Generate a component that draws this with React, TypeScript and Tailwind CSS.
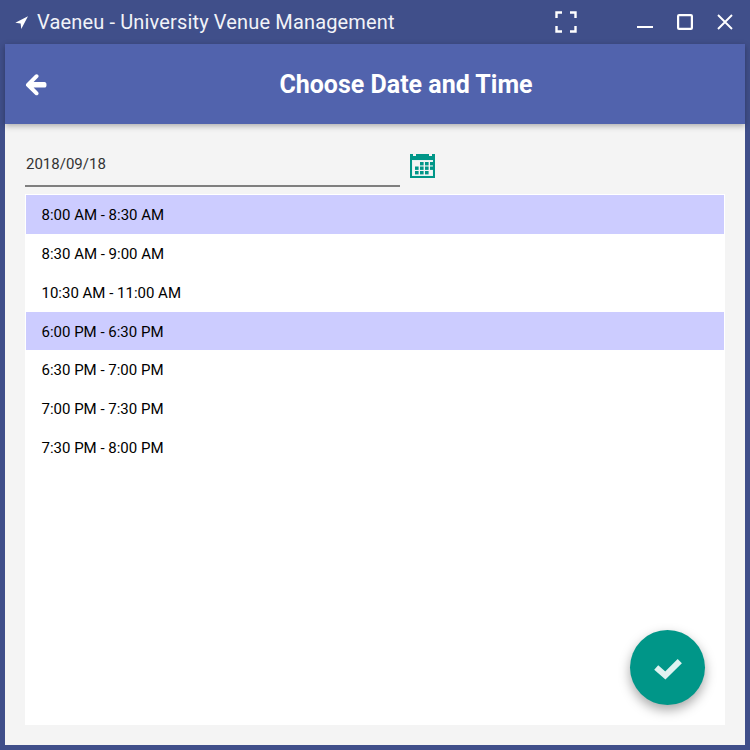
import React from "react";

const slots = [
  { label: "8:00 AM - 8:30 AM", selected: true },
  { label: "8:30 AM - 9:00 AM", selected: false },
  { label: "10:30 AM - 11:00 AM", selected: false },
  { label: "6:00 PM - 6:30 PM", selected: true },
  { label: "6:30 PM - 7:00 PM", selected: false },
  { label: "7:00 PM - 7:30 PM", selected: false },
  { label: "7:30 PM - 8:00 PM", selected: false },
];

const calendarCells = [
  [1, 0], [2, 0], [3, 0],
  [0, 1], [1, 1], [2, 1], [3, 1],
  [0, 2], [1, 2], [2, 2],
];

const CalendarIcon = () => (
  <svg width="25" height="25" viewBox="0 0 25 25" className="block">
    <path d="M0 1h3v2h3V1h13v2h3V1h3v24H0z" fill="#009688" />
    <rect x="2" y="7" width="21" height="16" fill="#e4f3f1" />
    <rect x="3" y="8" width="19" height="14" fill="#f4f4f4" />
    {calendarCells.map(([col, row]) => (
      <rect
        key={`${col}-${row}`}
        x={5 + col * 5}
        y={9 + row * 4.5}
        width="3.6"
        height="3.4"
        fill="#009688"
      />
    ))}
  </svg>
);

const App = () => {
  return (
    <div className="w-[750px] h-[750px] flex flex-col bg-[#404f8a] px-[5px] pb-[5px] font-['Roboto',sans-serif]">
      <div className="h-11 shrink-0 flex items-center text-white">
        <svg width="13" height="13" viewBox="0 0 12 12" className="ml-[10px]">
          <path d="M12 0.3 0.3 6.3 5.2 6.9 5.8 11.9z" fill="#fff" />
        </svg>
        <span className="w-[358px] ml-[9px] text-[20px] tracking-[0.15px] whitespace-nowrap text-[#f2f3f8]">
          Vaeneu - University Venue Management
        </span>
        <svg width="22" height="22" viewBox="0 0 22 22" className="ml-[160px]" fill="none" stroke="#fff" strokeWidth="2.4">
          <path d="M1.5 7V1.5H7M15 1.5h5.5V7M20.5 15v5.5H15M7 20.5H1.5V15" />
        </svg>
        <svg width="16" height="4" viewBox="0 0 16 4" className="ml-[60px] mt-[10px]" fill="none" stroke="#fff" strokeWidth="2">
          <path d="M0 2h16" />
        </svg>
        <svg width="16" height="16" viewBox="0 0 16 16" className="ml-[24px]" fill="none" stroke="#fff" strokeWidth="2.2">
          <rect x="1.1" y="1.1" width="13.8" height="13.8" rx="1" />
        </svg>
        <svg width="16" height="16" viewBox="0 0 16 16" className="ml-[24px]" fill="none" stroke="#fff" strokeWidth="1.9">
          <path d="M1 1l14 14M15 1 1 15" />
        </svg>
      </div>

      <div className="flex-1 relative flex flex-col bg-[#f4f4f4]">
        <header className="h-20 shrink-0 relative flex items-center justify-center bg-[#5163ad] shadow-[0_2px_6px_rgba(0,0,0,0.3)]">
          <svg width="22" height="22" viewBox="0 0 22 22" className="absolute left-[20px] top-[30px]" fill="#fff">
            <path d="M10.2 0.8c.8-.8 2-.8 2.8 0 .8.8.8 2 0 2.8L8.6 8h10.9c1.2 0 2 .9 2 2.9 0 1.9-.8 2.6-2 2.6H8.6l4.4 4.4c.8.8.8 2 0 2.8-.8.8-2 .8-2.8 0L1.5 12.2c-.8-.8-.8-2 0-2.8z" />
          </svg>
          <h1 className="ml-[62px] mt-[2px] text-[25px] font-bold text-white">Choose Date and Time</h1>
        </header>

        <div className="flex items-start pl-5 pt-[24px]">
          <div className="w-[375px] h-[39px] border-b-2 border-[#7f7f7f] pl-[1px] pt-[6px] text-[15px] leading-5 text-[#333333]">
            2018/09/18
          </div>
          <div className="ml-[10px] pt-[5px]">
            <CalendarIcon />
          </div>
        </div>

        <ul className="flex-1 mx-5 mb-5 mt-[7px] p-[1px] bg-white">
          {slots.map((slot) => (
            <li
              key={slot.label}
              className={`h-[38.85px] flex items-center pl-[15.5px] pt-[1.7px] text-[15px] text-black ${
                slot.selected ? "bg-[#ccccff]" : ""
              }`}
            >
              {slot.label}
            </li>
          ))}
        </ul>

        <button className="absolute right-[40px] bottom-[40px] w-[75px] h-[75px] rounded-full bg-[#009688] flex items-center justify-center shadow-[0_5px_12px_rgba(0,0,0,0.35)]">
          <svg width="30" height="24" viewBox="0 0 28 22" fill="none" stroke="#e0f2f1" strokeWidth="5.6" strokeLinejoin="miter">
            <path d="M3 10.5 11.5 18 25 4.5" />
          </svg>
        </button>
      </div>
    </div>
  );
};

export default App;
